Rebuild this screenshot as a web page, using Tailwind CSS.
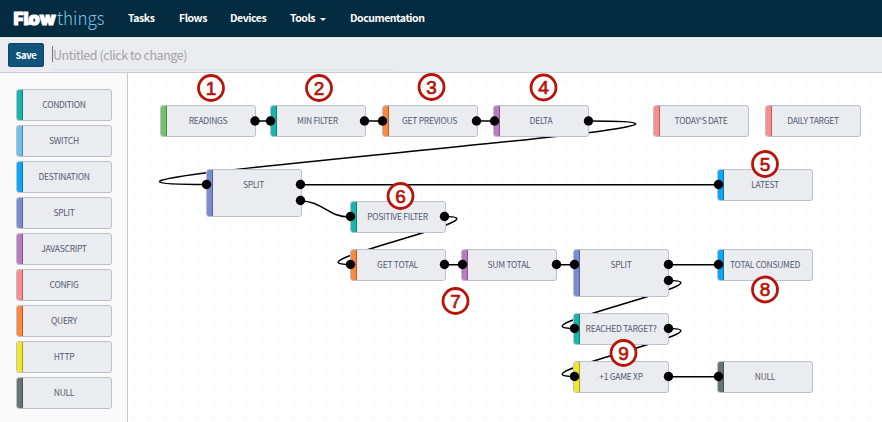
<!DOCTYPE html>
<html lang="en">
<head>
<meta charset="utf-8">
<title>Flowthings</title>
<script src="https://cdn.jsdelivr.net/npm/@tailwindcss/browser@4"></script>
</head>
<body class="w-[882px] h-[422px] overflow-hidden flex flex-col bg-white font-['Noto_Sans_CJK_SC','Open_Sans',sans-serif]">
<header class="h-[37px] shrink-0 bg-[#052b40] border-b border-[#021d2d] flex items-center pl-[13px] text-white">
  <svg class="w-[94px] h-[36px] shrink-0 mr-[21px] overflow-visible" viewBox="0 0 94 36">
    <text x="0.500" y="24.500" textLength="42" lengthAdjust="spacingAndGlyphs" font-family="Inter, sans-serif" font-weight="900" font-size="17" fill="#fff" stroke="#fff" stroke-width="1">Fl<tspan font-size="18">ow</tspan></text>
    <path d="M13.500 23.300H20" stroke="#fff" stroke-width="3"/>
    <text x="44" y="25" textLength="47.500" lengthAdjust="spacingAndGlyphs" font-family="'Noto Sans CJK SC', sans-serif" font-weight="300" font-size="18" fill="#7cc4e4">things</text>
  </svg>
  <nav class="flex text-[10.5px] font-bold leading-[36px] tracking-[-0.45px] whitespace-nowrap">
    <a class="w-[51px]">Tasks</a><a class="w-[51px]">Flows</a><a class="w-[60px]">Devices</a>
    <a class="w-[60px] flex items-center gap-[5px]">Tools<span class="mt-[2px] border-x-[3px] border-t-[3px] border-x-transparent border-t-white"></span></a>
    <a>Documentation</a>
  </nav>
</header>
<div class="h-[36px] shrink-0 bg-[#ebecf0] border-b border-[#c9ccd6] flex items-center pl-[8px]">
  <button class="w-[36px] h-[24px] rounded-[2px] bg-[#11547a] border border-[#0c4668] text-white text-[9.5px] tracking-[-0.4px] font-bold leading-[22px]">Save</button>
  <div class="ml-[8px] w-[342px] h-[32px] mt-[-1px] border-b border-[#e0e1e6] flex items-center text-[#a2a2a5] text-[12.5px] tracking-[-0.45px] whitespace-nowrap"><span class="w-px h-[16px] bg-[#777] shrink-0"></span><span class="pt-[4px]">Untitled (click to change)</span></div>
</div>
<main class="flex flex-1 min-h-0">
  <aside id="palette" class="w-[128px] shrink-0 bg-[#fafafa] border-r border-[#c3c7d3] pt-[16px] pl-[16px] flex flex-col gap-[4px]"></aside>
  <section id="canvas" class="relative flex-1 overflow-hidden bg-white">
    <svg class="absolute inset-0 w-[754px] h-[349px]" viewBox="128 73 754 349">
      <defs><pattern id="dots" x="133" y="80" width="16" height="16" patternUnits="userSpaceOnUse"><rect width="1" height="1" fill="#dedede"/></pattern></defs>
      <rect x="128" y="73" width="754" height="349" fill="url(#dots)"/>
      <g fill="none" stroke="#000" stroke-width="1.500">
        <path d="M256 121H270M365 121H382M477 121H494M301 184.700H718M445 264.700H462M557 264.700H574M669 264.700H718M669 376.700H718"/>
        <path d="M589 121C846 121-52 184.500 207 184.500"/>
        <path d="M300.500 201C323 201 327 217 350 217"/>
        <path d="M444.500 216.500C511 216.500 284 264.500 350.500 264.500"/>
        <path d="M668.500 280.500C735 280.500 508 328.500 574.500 328.500"/>
        <path d="M668.500 328.500C735 328.500 508 376.500 574.500 376.500"/>
      </g>
    </svg>
    <div id="nodes"></div>
    <svg id="overlay" class="absolute inset-0 w-[754px] h-[349px]" viewBox="128 73 754 349"></svg>
  </section>
</main>
<script>
const box = 'w-[96px] h-[32px] shrink-0 rounded-[3px] border border-[#bcbfcc] bg-[#ebecf0] overflow-hidden flex text-[#525a70] text-[8.5px] tracking-[-0.28px] leading-[28px]';
const bar = 'w-[6px] h-full shrink-0 border-r border-black/30';
const label = 'flex-1 -ml-[6px] text-center whitespace-nowrap';
const colors = {condition:'#17b8ab', switch:'#6fc0e8', destination:'#0ea7f7', split:'#7b8bd0', javascript:'#b97cc0', config:'#fb8d92', query:'#fc883f', http:'#f2e62f', null:'#667477', source:'#72c267'};
const node = (type, text) => `<span class="${bar}" style="background:${colors[type]}"></span><span class="${label}">${text}</span>`;
document.getElementById('palette').innerHTML = ['condition','switch','destination','split','javascript','config','query','http','null']
  .map(t => `<div class="${box}">${node(t, t.toUpperCase())}</div>`).join('');
const nodes = [
  [160,105,'source','READINGS'],[269.5,105,'condition','MIN FILTER'],[381.5,105,'query','GET PREVIOUS'],[493,105,'javascript','DELTA'],
  [653,105,'config',"TODAY'S DATE"],[765,105,'config','DAILY TARGET'],[205.5,169,'split','SPLIT',48],[717,169,'destination','LATEST'],
  [349.5,201,'condition','POSITIVE FILTER'],[349.5,249,'query','GET TOTAL'],[461,249,'javascript','SUM TOTAL'],[573,249,'split','SPLIT',48],
  [717,249,'destination','TOTAL CONSUMED'],[573,313,'condition','REACHED TARGET?'],[573,361,'http','+1 GAME XP'],[717,361,'null','NULL']];
document.getElementById('nodes').innerHTML = nodes.map(([x,y,t,s,h=32]) =>
  `<div class="absolute ${box}" style="left:${x-128}px;top:${y-73}px;height:${h}px">${node(t,s)}</div>`).join('');
const ports = [[255,121],[270.5,121],[364.5,121],[382.5,121],[476.5,121],[494.5,121],[588.5,121],[206.5,184.5],[300.5,184.5],[300.5,200.5],[718.5,184.5],
  [350.5,216.5],[444.5,216.5],[350.5,264.5],[444.5,264.5],[462.5,264.5],[556.5,264.5],[574.5,264.5],[668.5,264.5],[668.5,280.5],[718.5,264.5],[574.5,328.5],[668.5,328.5],[574.5,376.5],[668.5,376.5],[718.5,376.5]];
const badges = [[211,88],[319,88],[431.5,87],[543.5,87.5],[765,164],[400.5,196],[455.5,301],[765,289.5],[623.5,353]];
document.getElementById('overlay').innerHTML = ports.map(([x,y]) => `<circle cx="${x}" cy="${y}" r="4.700"/>`).join('') +
  badges.map(([x,y],i) => `<circle cx="${x}" cy="${y}" r="12.500" fill="#fff" stroke="#b81409" stroke-width="2.800"/><text x="${x}" y="${y+6.7}" text-anchor="middle" font-family="Liberation Sans, sans-serif" font-size="19" fill="#b81409" stroke="#b81409" stroke-width=".7">${i+1}</text>`).join('');
</script>
</body>
</html>
